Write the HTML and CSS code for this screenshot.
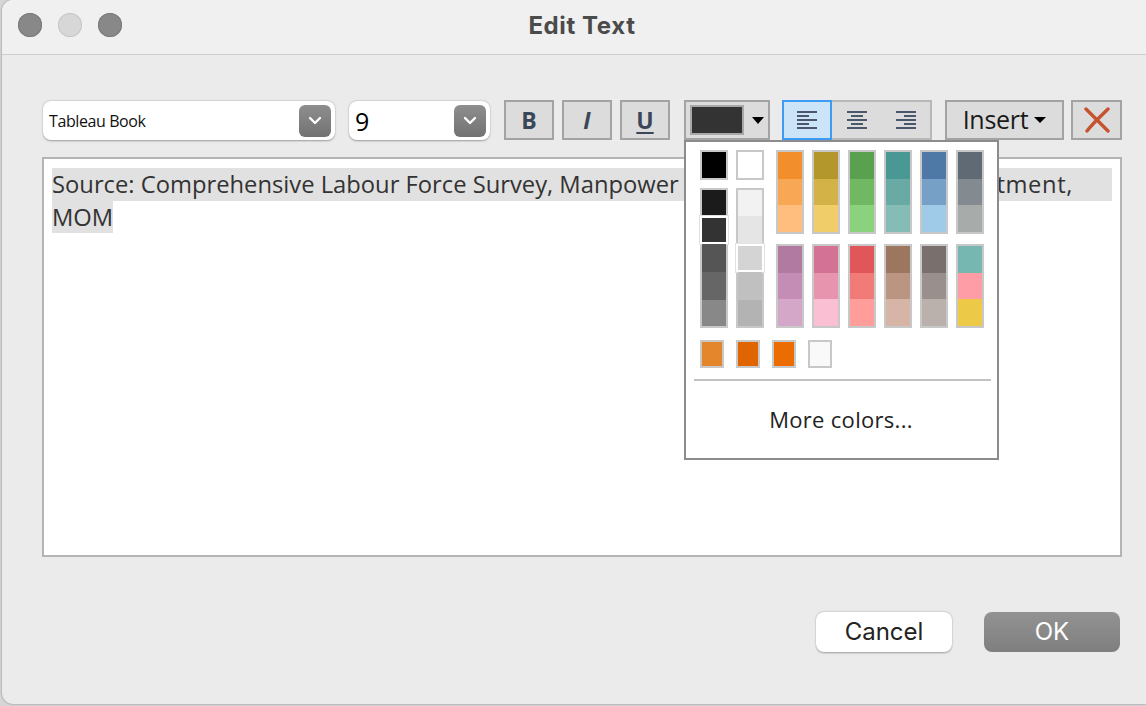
FILE: index.html
```html
<!DOCTYPE html>
<html lang="en">
<head>
<meta charset="utf-8">
<title>Edit Text</title>
<link rel="stylesheet" href="styles.css">
</head>
<body>
<div class="window">
  <div class="titlebar">
    <div class="lights">
      <span class="light dark"></span>
      <span class="light pale"></span>
      <span class="light dark"></span>
    </div>
    <div class="title">Edit Text</div>
    <div class="title-spacer"></div>
  </div>

  <div class="content">
    <div class="toolbar">
      <div class="dropdown font-dd">
        <span class="dd-label">Tableau Book</span>
        <span class="dd-arrow"><svg width="14" height="9" viewBox="0 0 14 9"><path d="M2 2 L7 7 L12 2" fill="none" stroke="#fff" stroke-width="2.4" stroke-linecap="round" stroke-linejoin="round"/></svg></span>
      </div>
      <div class="dropdown size-dd">
        <span class="dd-label size">9</span>
        <span class="dd-arrow"><svg width="14" height="9" viewBox="0 0 14 9"><path d="M2 2 L7 7 L12 2" fill="none" stroke="#fff" stroke-width="2.4" stroke-linecap="round" stroke-linejoin="round"/></svg></span>
      </div>
      <div class="btn fmt bold">B</div>
      <div class="btn fmt italic">I</div>
      <div class="btn fmt under">U</div>
      <div class="btn color-btn"><span class="color-swatch"></span><span class="tri"></span></div>
      <div class="align-group">
        <div class="align-btn selected">
          <svg width="20" height="18" viewBox="0 0 20 18"><g stroke="#4b586b" stroke-width="2"><line x1="0" y1="1" x2="20" y2="1"/><line x1="0" y1="5" x2="12" y2="5"/><line x1="0" y1="9" x2="20" y2="9"/><line x1="0" y1="13" x2="12" y2="13"/><line x1="0" y1="17" x2="20" y2="17"/></g></svg>
        </div>
        <div class="align-btn">
          <svg width="20" height="18" viewBox="0 0 20 18"><g stroke="#4b586b" stroke-width="2"><line x1="0" y1="1" x2="20" y2="1"/><line x1="4" y1="5" x2="16" y2="5"/><line x1="0" y1="9" x2="20" y2="9"/><line x1="4" y1="13" x2="16" y2="13"/><line x1="0" y1="17" x2="20" y2="17"/></g></svg>
        </div>
        <div class="align-btn">
          <svg width="20" height="18" viewBox="0 0 20 18"><g stroke="#4b586b" stroke-width="2"><line x1="0" y1="1" x2="20" y2="1"/><line x1="8" y1="5" x2="20" y2="5"/><line x1="0" y1="9" x2="20" y2="9"/><line x1="8" y1="13" x2="20" y2="13"/><line x1="0" y1="17" x2="20" y2="17"/></g></svg>
        </div>
      </div>
      <div class="btn insert">Insert<span class="tri tri-insert"></span></div>
      <div class="btn clear">
        <svg width="28" height="26" viewBox="0 0 28 26"><path d="M3 2 C10 9 17 16 25 24" fill="none" stroke="#c4532e" stroke-width="3.4" stroke-linecap="round"/><path d="M25 2 C18 9 10 16 4 24" fill="none" stroke="#c4532e" stroke-width="3.4" stroke-linecap="round"/></svg>
      </div>
    </div>

    <div class="editor">
      <div class="line sel">Source: Comprehensive Labour Force Survey, Manpower<span class="hidden-run"> Research and Statistics Depar</span><span class="tail-run">tment,</span></div>
      <div class="line"><span class="sel">MOM</span></div>
    </div>

    <div class="actions">
      <button class="action cancel">Cancel</button>
      <button class="action ok">OK</button>
    </div>

    <div class="palette">
      <div class="pal-main">
        <div class="grays">
          <div class="gcol">
            <div class="single" style="background:#000000"></div>
            <div class="gbox">
              <div class="seg s26" style="background:#1b1b1b"></div>
              <div class="seg s28 picked" style="background:#333333"></div>
              <div class="seg s28" style="background:#555555"></div>
              <div class="seg s28" style="background:#666666"></div>
              <div class="seg s26" style="background:#888888"></div>
            </div>
          </div>
          <div class="gcol">
            <div class="single" style="background:#ffffff"></div>
            <div class="gbox">
              <div class="seg s26" style="background:#f2f2f2"></div>
              <div class="seg s28" style="background:#e5e5e5"></div>
              <div class="seg s28 picked" style="background:#d4d4d4"></div>
              <div class="seg s28" style="background:#c0c0c0"></div>
              <div class="seg s26" style="background:#b3b3b3"></div>
            </div>
          </div>
        </div>
        <div class="colors">
          <div class="cblock"><span style="background:#f28e2b"></span><span style="background:#f8a754"></span><span style="background:#ffbe7d"></span></div>
          <div class="cblock"><span style="background:#b3972c"></span><span style="background:#d3b247"></span><span style="background:#f0cd68"></span></div>
          <div class="cblock"><span style="background:#59a14f"></span><span style="background:#70b862"></span><span style="background:#8cd17d"></span></div>
          <div class="cblock"><span style="background:#499894"></span><span style="background:#6aaaa5"></span><span style="background:#86bcb6"></span></div>
          <div class="cblock"><span style="background:#4e79a7"></span><span style="background:#76a0c6"></span><span style="background:#a0cbe8"></span></div>
          <div class="cblock"><span style="background:#5f6a75"></span><span style="background:#838a90"></span><span style="background:#a7acab"></span></div>
          <div class="cblock"><span style="background:#b07aa1"></span><span style="background:#c48db5"></span><span style="background:#d4a6c8"></span></div>
          <div class="cblock"><span style="background:#d37295"></span><span style="background:#e794ae"></span><span style="background:#fabfd2"></span></div>
          <div class="cblock"><span style="background:#e15759"></span><span style="background:#f07b77"></span><span style="background:#ff9d9a"></span></div>
          <div class="cblock"><span style="background:#9d7660"></span><span style="background:#b99582"></span><span style="background:#d7b5a6"></span></div>
          <div class="cblock"><span style="background:#79706e"></span><span style="background:#998f8c"></span><span style="background:#bab0ac"></span></div>
          <div class="cblock"><span style="background:#76b7b2"></span><span style="background:#ff9da7"></span><span style="background:#edc948"></span></div>
        </div>
      </div>
      <div class="pal-recent">
        <div class="recent" style="background:#e3862c"></div>
        <div class="recent" style="background:#e06400"></div>
        <div class="recent" style="background:#eb6c00"></div>
        <div class="recent" style="background:#f9f9f9"></div>
      </div>
      <div class="pal-sep"></div>
      <div class="pal-more">More colors...</div>
    </div>
  </div>
</div>
</body>
</html>
```

FILE: styles.css
```css
* { box-sizing: border-box; }

html, body {
  margin: 0;
  padding: 0;
  width: 1146px;
  height: 706px;
  overflow: hidden;
  background: #d6d6d6;
  font-family: "Open Sans", "Noto Sans", sans-serif;
}

.window {
  margin-left: 2px;
  width: 1144px;
  height: 704px;
  background: #ebebeb;
  border-radius: 11px 0 0 11px;
  box-shadow: 0 0 2px rgba(0, 0, 0, 0.45);
  overflow: hidden;
}

/* Title bar */
.titlebar {
  height: 55px;
  display: flex;
  align-items: center;
  background: #f0f0f0;
  border-bottom: 1px solid #cdcdcd;
}
.lights {
  width: 122px;
  display: flex;
  gap: 16px;
  padding-left: 16px;
  padding-bottom: 4px;
}
.light {
  width: 24px;
  height: 24px;
  border-radius: 50%;
  display: block;
}
.light.dark { background: #888888; box-shadow: inset 0 0 0 1px #7a7a7a; }
.light.pale { background: #d7d7d7; box-shadow: inset 0 0 0 1px #c6c6c6; }
.title {
  flex: 1;
  text-align: center;
  font-family: Inter, "Open Sans", sans-serif;
  font-weight: 700;
  font-size: 24px;
  letter-spacing: 0.6px;
  color: #4b4b4b;
  padding-bottom: 4px;
}
.title-spacer { width: 106px; }

/* Content */
.content {
  position: relative;
  padding: 45px 24px 0 40px;
}

.toolbar {
  height: 40px;
  display: flex;
  align-items: center;
  padding-left: 1px;
}

.dropdown {
  height: 39px;
  margin-top: 1px;
  background: #ffffff;
  border-radius: 8px;
  box-shadow: 0 0.5px 2px rgba(0, 0, 0, 0.35);
  display: flex;
  align-items: center;
  justify-content: space-between;
  padding: 0 4px 0 6px;
}
.font-dd { width: 292px; margin-right: 14px; }
.size-dd { width: 141px; margin-right: 14px; }
.dd-label {
  font-size: 16px;
  color: #111;
  letter-spacing: -0.4px;
}
.dd-label.size { font-size: 25px; color: #000; letter-spacing: 0; }
.dd-arrow {
  width: 32px;
  height: 32px;
  border-radius: 6px;
  background: linear-gradient(#8e8e8e, #727272);
  display: flex;
  align-items: center;
  justify-content: center;
}

.btn {
  height: 40px;
  background: #dcdcdc;
  border: 2px solid #a3a3a3;
  display: flex;
  align-items: center;
  justify-content: center;
}
.fmt {
  width: 50px;
  margin-right: 8px;
  font-size: 23px;
  font-weight: 700;
  color: #3b4759;
}
.fmt.italic { font-style: italic; }
.fmt.under { margin-right: 14px; text-decoration: underline; text-decoration-thickness: 2px; text-underline-offset: 3px; }

.color-btn {
  width: 86px;
  margin-right: 12px;
  justify-content: flex-start;
  padding-left: 4px;
}
.color-swatch {
  width: 54px;
  height: 30px;
  background: #333333;
  border: 2px solid #a8a8a8;
}
.tri {
  width: 0;
  height: 0;
  border-left: 6px solid transparent;
  border-right: 6px solid transparent;
  border-top: 7px solid #000;
  margin-left: 8px;
}
.tri-insert {
  border-top-width: 6px;
  margin-left: 6px;
  margin-top: 2px;
}

.align-group {
  width: 150px;
  height: 40px;
  margin-right: 13px;
  display: flex;
  border: 2px solid #b8b8b8;
  background: #dcdcdc;
}
.align-btn {
  flex: 1;
  display: flex;
  align-items: center;
  justify-content: center;
}
.align-btn.selected {
  background: #cce4f8;
  margin: -2px 0 -2px -2px;
  border: 2px solid #3d9bf4;
  flex: 0 0 50px;
}

.insert {
  width: 119px;
  margin-right: 7px;
  font-size: 25px;
  letter-spacing: -0.3px;
  color: #1a1a1a;
  padding-bottom: 2px;
}
.clear { width: 51px; }

/* Editor */
.editor {
  margin-top: 17px;
  height: 400px;
  background: #ffffff;
  border: 2px solid #b4b4b4;
  padding: 9px 8px;
  font-size: 23.75px;
  line-height: 33px;
  color: #333333;
}
.line { white-space: nowrap; overflow: hidden; }
.sel { background: #e1e1e1; }
.hidden-run { letter-spacing: -0.68px; padding-left: 4px; }
.tail-run { letter-spacing: 0.6px; }

/* Actions */
.actions {
  display: flex;
  justify-content: flex-end;
  gap: 32px;
  margin-top: 55px;
  padding-right: 2px;
}
.action {
  width: 136px;
  height: 40px;
  border: none;
  border-radius: 8px;
  font-family: Inter, "Open Sans", sans-serif;
  font-size: 24px;
  padding: 0 0 2px;
}
.cancel {
  background: #ffffff;
  color: #222;
  box-shadow: 0 0.5px 2px rgba(0, 0, 0, 0.35);
}
.ok {
  background: linear-gradient(#939393, #7f7f7f);
  color: #ffffff;
}

/* Palette popup */
.palette {
  position: absolute;
  left: 682px;
  top: 85px;
  width: 315px;
  height: 320px;
  background: #ffffff;
  border: 2px solid #8c8c8c;
  padding: 8px 13px 0 14px;
}
.pal-main {
  display: flex;
  gap: 12px;
}
.grays {
  display: flex;
  gap: 8px;
}
.gcol {
  display: flex;
  flex-direction: column;
  gap: 8px;
  width: 28px;
}
.single {
  width: 28px;
  height: 30px;
  border: 2px solid #c8c8c8;
}
.gbox {
  height: 140px;
  border: 2px solid #c8c8c8;
  display: flex;
  flex-direction: column;
}
.seg { width: 100%; }
.s26 { height: 26px; }
.s28 { height: 28px; }
.seg.picked {
  width: 28px;
  margin: 0 -2px;
  border: 2px solid #ffffff;
  box-shadow: 0 0 0 1px #e2e2e2;
}
.colors {
  display: grid;
  grid-template-columns: repeat(6, 28px);
  grid-auto-rows: 84px;
  column-gap: 8px;
  row-gap: 10px;
}
.cblock {
  border: 2px solid #c8c8c8;
  display: flex;
  flex-direction: column;
}
.cblock span { flex: 1; display: block; }

.pal-recent {
  display: flex;
  gap: 12px;
  margin-top: 12px;
}
.recent {
  width: 24px;
  height: 28px;
  border: 2px solid #c8c8c8;
}
.pal-sep {
  height: 2px;
  background: #c2c2c2;
  margin: 11px -7px 0 -6px;
}
.pal-more {
  height: 76px;
  display: flex;
  align-items: center;
  justify-content: center;
  font-size: 22px;
  letter-spacing: 0.3px;
  color: #222;
  padding-right: 2px;
}
```
